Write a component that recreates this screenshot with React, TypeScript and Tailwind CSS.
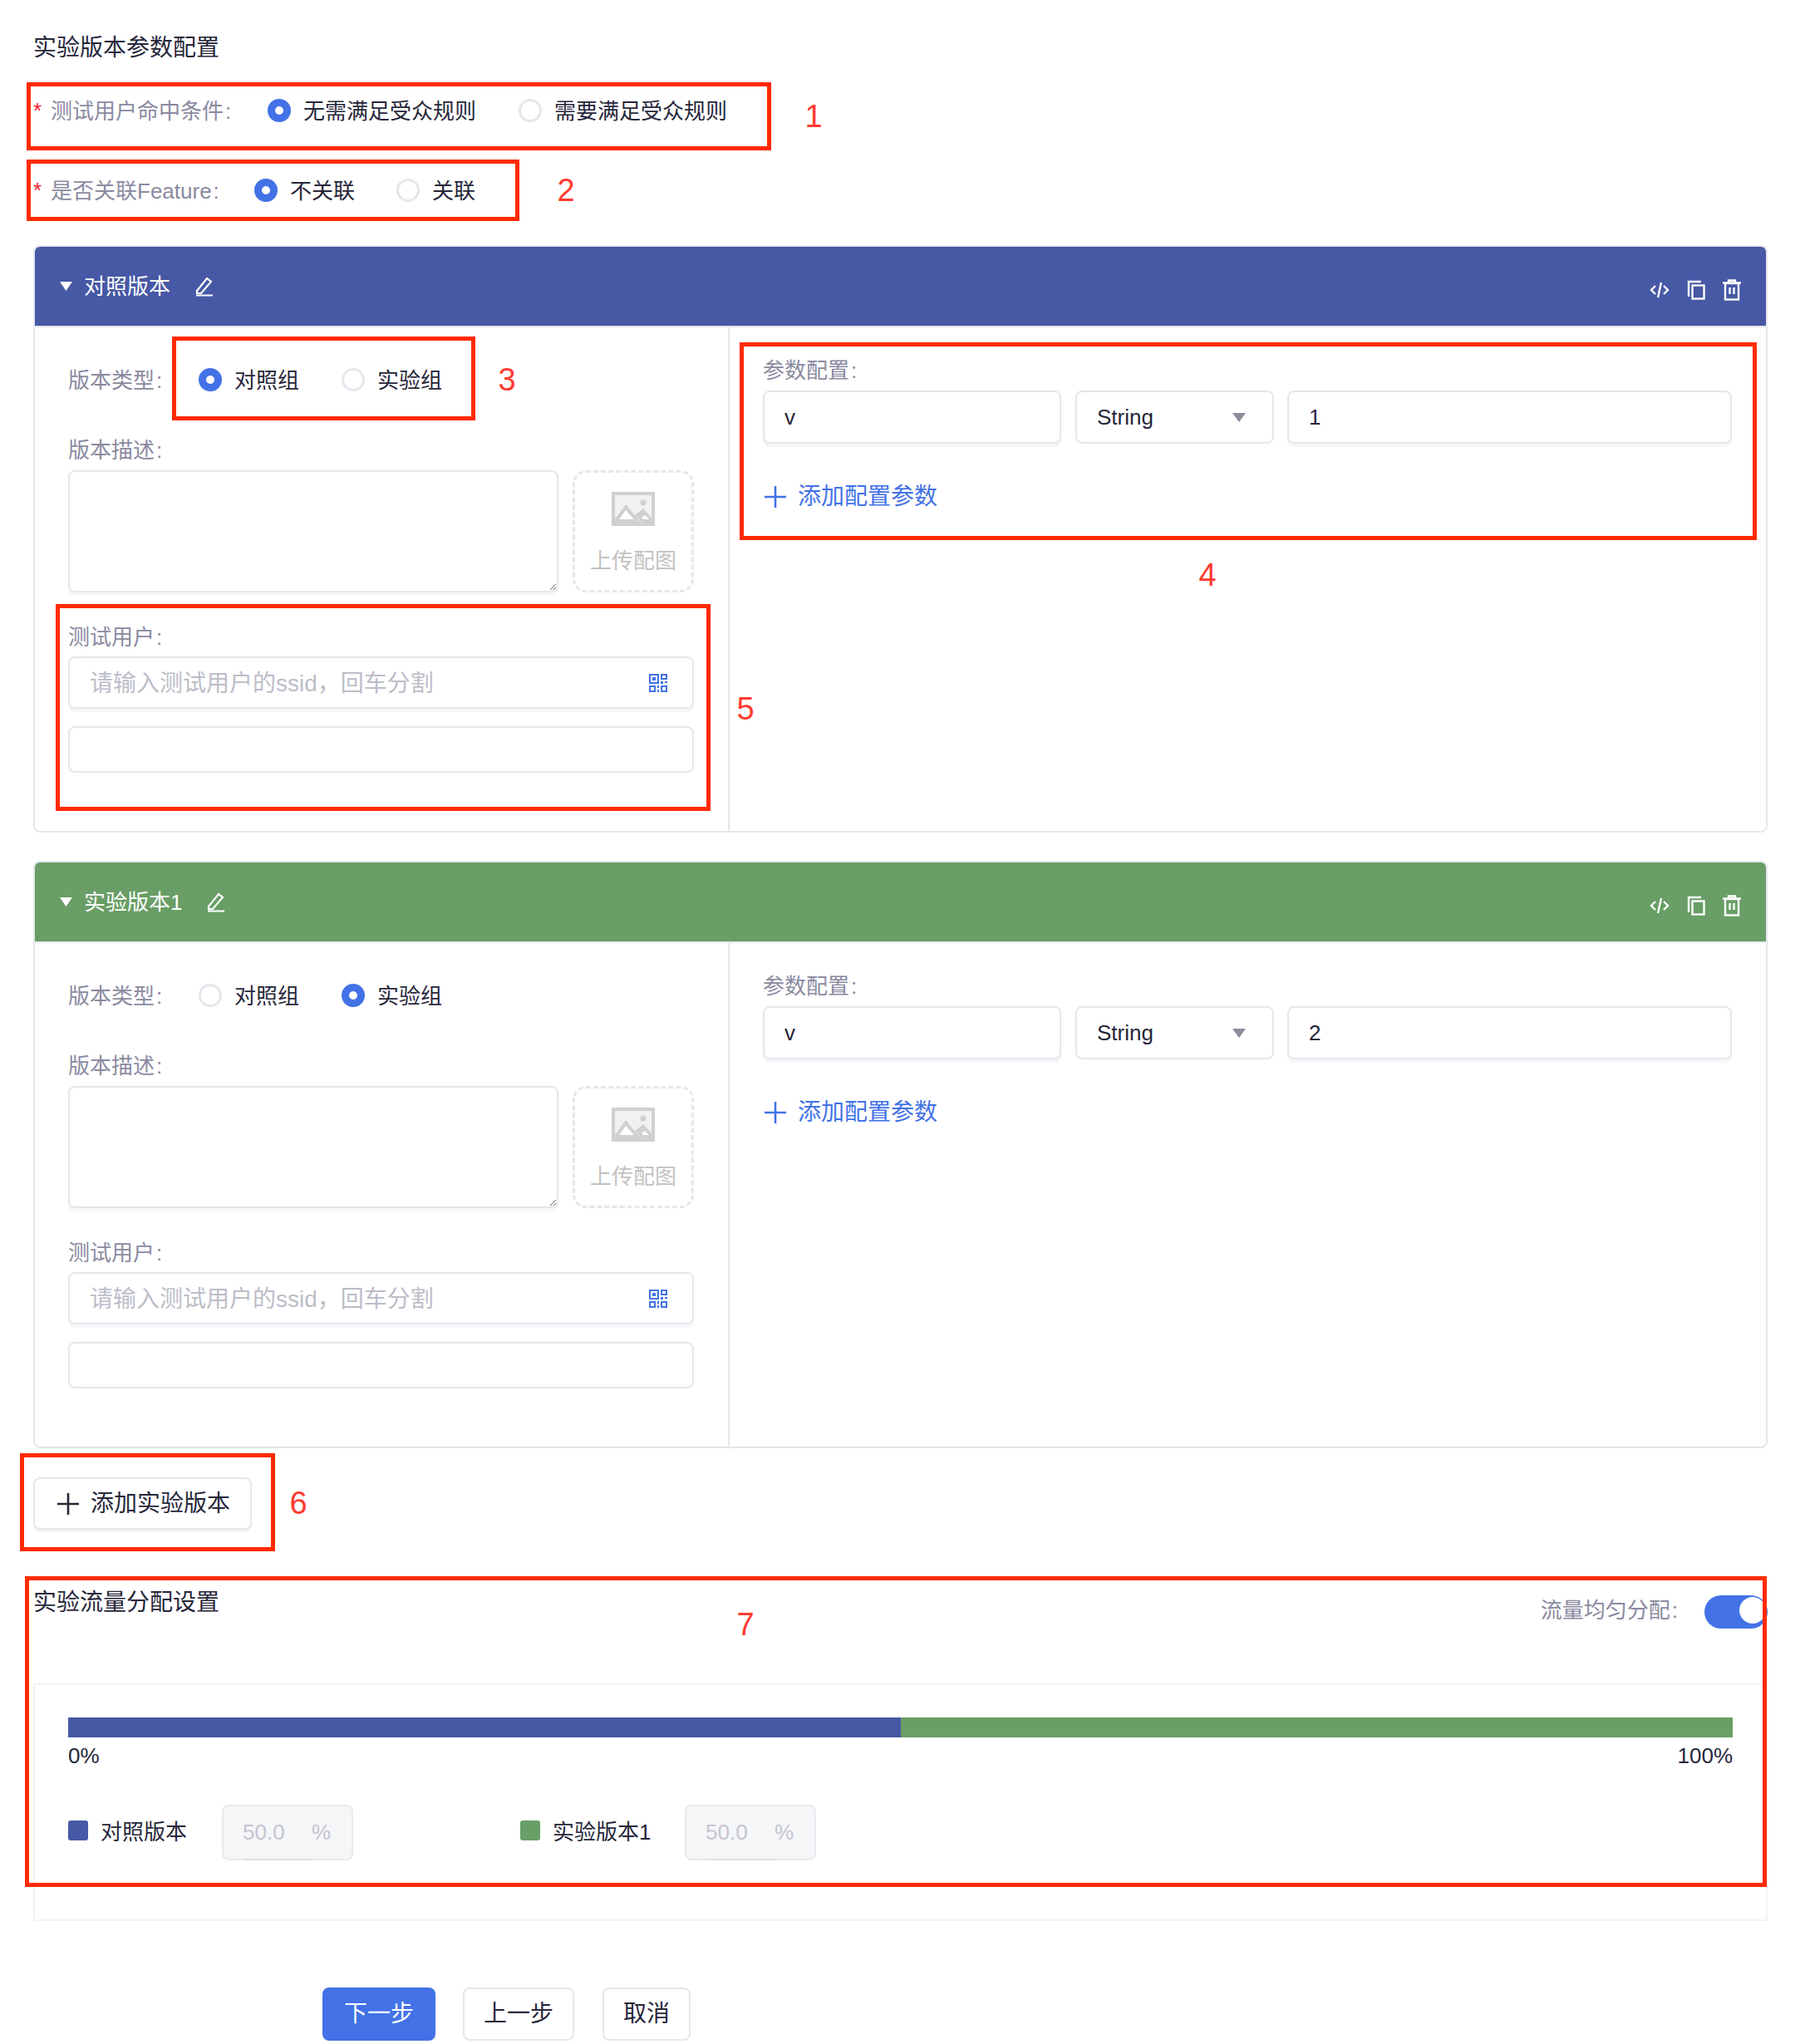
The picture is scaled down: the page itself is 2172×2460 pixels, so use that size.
import React from 'react';

const LABEL = 'text-[26px] leading-[36px] text-[#8a8aa0] whitespace-nowrap';
const BOX = 'rounded-lg border-2 border-[#e6e6ed] bg-white shadow-[0_4px_0_#f6f6f9]';

const Colon = () => <span className="ml-[2px]">:</span>;

const Radio: React.FC<{ on?: boolean; label: string; gap: string }> = ({ on, label, gap }) => (
  <label className={`flex items-center ${gap}`}>
    {on ? (
      <span className="w-[28px] h-[28px] rounded-full border-[9px] border-[#4272e6] bg-white" />
    ) : (
      <span className="w-[28px] h-[28px] rounded-full border-[3px] border-[#e6e6ed] bg-white" />
    )}
    <span className="ml-[15px] mt-[2px] text-[26px] leading-[36px] text-[#26263a] whitespace-nowrap">{label}</span>
  </label>
);

const HeaderIcons = () => (
  <div className="flex items-center gap-[21px] mt-[8px] text-white">
    <svg width="24" height="20" viewBox="0 0 24 20" fill="none" stroke="currentColor" strokeWidth="2.4">
      <path d="M7 5 L2 10 L7 15" />
      <path d="M17 5 L22 10 L17 15" />
      <path d="M14 1 L10 19" />
    </svg>
    <svg width="22" height="24" viewBox="0 0 22 24" fill="none" stroke="currentColor" strokeWidth="2.4">
      <path d="M2 20 V2 H17" />
      <rect x="6.5" y="6.5" width="14" height="16" />
    </svg>
    <svg width="22" height="26" viewBox="0 0 22 26" fill="none" stroke="currentColor" strokeWidth="2.4">
      <path d="M0 4.5 H22" />
      <path d="M7 4 V1.5 H15 V4" />
      <rect x="3" y="5" width="16" height="19.5" />
      <path d="M8.5 10 V18 M13.5 10 V18" />
    </svg>
  </div>
);

const EditIcon = () => (
  <svg width="22" height="24" viewBox="0 0 22 24" fill="none" stroke="white" strokeWidth="2.2">
    <path d="M2 17 L14 2 L19 6 L7 20 L2 20 Z" />
    <path d="M1 22.5 H21" />
  </svg>
);

const QrIcon = () => (
  <svg width="22" height="22" viewBox="0 0 22 22" fill="#4272e6">
    <path fillRule="evenodd" d="M0 0H12V12H0Z M2 2V10H10V2Z" />
    <rect x="4" y="4" width="4" height="4" />
    <path fillRule="evenodd" d="M14 0H22V7H14Z M16 2V5H20V2Z" />
    <rect x="14" y="9" width="3" height="3" />
    <rect x="19" y="9" width="3" height="2" />
    <path fillRule="evenodd" d="M0 14H8V22H0Z M2 16V20H6V16Z" />
    <rect x="10" y="14" width="2" height="3" />
    <rect x="10" y="19" width="2" height="3" />
    <path fillRule="evenodd" d="M14 14H22V22H14Z M16 16V20H20V16Z" />
  </svg>
);

const ImageIcon = () => (
  <svg width="52" height="41" viewBox="0 0 52 41">
    <rect width="52" height="41" fill="#cfd0d0" />
    <rect x="4" y="4" width="44" height="33" fill="#f1f1f1" />
    <circle cx="38" cy="13" r="3.5" fill="#cfd0d0" />
    <path d="M4 33 L17 15 L35 37 H4Z" fill="#cfd0d0" />
    <path d="M9 33 L17 22 L27 33Z" fill="#ffffff" />
    <path d="M28 28 L38 20 L48 31 V37 H36Z" fill="#cfd0d0" />
    <path d="M36 31 L40 28 L45 33 H38Z" fill="#ffffff" />
  </svg>
);

const PlusIcon: React.FC<{ color: string; size: number }> = ({ color, size }) => (
  <svg width={size} height={size} viewBox="0 0 26 26" stroke={color} strokeWidth="2.6">
    <path d="M13 0 V26 M0 13 H26" />
  </svg>
);

interface VersionCardProps {
  title: string;
  headerClass: string;
  editGap: string;
  control?: boolean;
  value: string;
}

const VersionCard: React.FC<VersionCardProps> = ({ title, headerClass, editGap, control, value }) => (
  <div className="rounded-lg border-2 border-[#e6e6ed] overflow-hidden">
    <div className={`h-[97px] flex items-center justify-between pl-[30px] pr-[30px] border-b-2 border-[#e6e6ed] ${headerClass}`}>
      <div className="flex items-center">
        <svg width="15" height="11" viewBox="0 0 15 11" fill="white">
          <path d="M0 0 H15 L7.5 11Z" />
        </svg>
        <span className="ml-[14px] text-[26px] leading-[36px] text-white">{title}</span>
        <span className={editGap}>
          <EditIcon />
        </span>
      </div>
      <HeaderIcons />
    </div>
    <div className="flex h-[606px]">
      <div className="w-[836px] shrink-0 border-r-2 border-[#e6e6ed] pl-[40px] pr-[41px] pt-[45px]">
        <div className="flex items-center h-[36px]">
          <span className={`${LABEL} w-[157px] mt-[2px]`}>版本类型<Colon /></span>
          <Radio on={control} label="对照组" gap="mr-[51px]" />
          <Radio on={!control} label="实验组" gap="" />
        </div>
        <div className={`${LABEL} mt-[49px]`}>版本描述<Colon /></div>
        <div className="flex mt-[6px] gap-[17px]">
          <textarea className={`${BOX} w-[590px] h-[147px] outline-none block`} />
          <div className="w-[146px] h-[147px] rounded-2xl border-[3px] border-dashed border-[#e6e6ed] flex flex-col items-center pt-[23px]">
            <ImageIcon />
            <span className="mt-[24px] text-[26px] leading-[36px] text-[#c2c2c2] whitespace-nowrap">上传配图</span>
          </div>
        </div>
        <div className={`${LABEL} mt-[36px]`}>测试用户<Colon /></div>
        <div className={`${BOX} mt-[5px] h-[63px] flex items-center pl-[24px] pr-[30px]`}>
          <input
            placeholder="请输入测试用户的ssid，回车分割"
            className="flex-1 min-w-0 mt-[2px] text-[28px] outline-none placeholder:text-[#bcbdc8]"
          />
          <QrIcon />
        </div>
        <div className="mt-[21px] h-[56px] rounded-lg border-2 border-[#e6e6ed]" />
      </div>
      <div className="flex-1 min-w-0 pl-[40px] pr-[41px] pt-[34px]">
        <div className={LABEL}>参数配置<Colon /></div>
        <div className="flex mt-[6px] gap-[17px] h-[64px]">
          <input
            defaultValue="v"
            className={`${BOX} w-[359px] pl-[24px] text-[26px] text-[#26263a] outline-none`}
          />
          <div className="w-[239px] rounded-lg border-2 border-[#e6e6ed] flex items-center justify-between pl-[24px] pr-[32px] text-[26px] text-[#26263a]">
            String
            <svg width="16" height="11" viewBox="0 0 16 11" fill="#8c8c9c">
              <path d="M0 0 H16 L8 11Z" />
            </svg>
          </div>
          <input
            defaultValue={value}
            className={`${BOX} flex-1 min-w-0 pl-[24px] -ml-[1px] text-[26px] text-[#26263a] outline-none`}
          />
        </div>
        <div className="flex items-center mt-[46px] h-[36px] pl-[2px]">
          <PlusIcon color="#4272e6" size={26} />
          <span className="ml-[14px] text-[28px] text-[#4272e6] whitespace-nowrap">添加配置参数</span>
        </div>
      </div>
    </div>
  </div>
);

const Legend: React.FC<{ color: string; label: string; className: string; labelWidth: string }> = ({ color, label, className, labelWidth }) => (
  <div className={`flex items-center ${className}`}>
    <span className={`w-[24px] h-[24px] rounded-[3px] -mt-[6px] ${color}`} />
    <span className={`ml-[15px] ${labelWidth} -mt-[2px] text-[26px] leading-[36px] text-[#26263a] whitespace-nowrap`}>{label}</span>
    <div className="relative w-[158px] h-[67px] rounded-lg border-2 border-[#e9eaef] bg-[#f5f6f8] flex items-center justify-between pl-[23px] pr-[25px] text-[26px] text-[#c3c5d0]">
      <span>50.0</span>
      <span>%</span>
      <span className="absolute left-[23px] bottom-[-2px] w-[84px] h-[2px] bg-[#dfe0e5]" />
    </div>
  </div>
);

const RedBox: React.FC<{ className: string }> = ({ className }) => (
  <div className={`absolute border-[5px] border-[#ff2a00] pointer-events-none ${className}`} />
);

const Num: React.FC<{ className: string; n: number }> = ({ className, n }) => (
  <span className={`absolute -translate-x-1/2 -translate-y-1/2 text-[38px] leading-none text-[#ff3b30] ${className}`}>{n}</span>
);

export default function App() {
  return (
    <div className="relative w-[2172px] h-[2460px] bg-white pl-[40px] pr-[45px] pt-[38px] font-['Liberation_Sans','Noto_Sans_CJK_SC',sans-serif] text-[#26263a]">
      <div className="text-[28px] leading-[40px] whitespace-nowrap">实验版本参数配置</div>

      <div className="flex items-center h-[36px] mt-[37px]">
        <span className="w-[21px] text-[26px] text-[#f5222d]">*</span>
        <span className={`${LABEL} w-[261px] mt-[2px]`}>测试用户命中条件<Colon /></span>
        <Radio on label="无需满足受众规则" gap="mr-[51px]" />
        <Radio label="需要满足受众规则" gap="" />
      </div>
      <div className="flex items-center h-[36px] mt-[60px]">
        <span className="w-[21px] text-[26px] text-[#f5222d]">*</span>
        <span className={`${LABEL} w-[245px] mt-[2px]`}>是否关联Feature<Colon /></span>
        <Radio on label="不关联" gap="mr-[50px]" />
        <Radio label="关联" gap="" />
      </div>

      <div className="mt-[48px]">
        <VersionCard title="对照版本" headerClass="bg-[#4758a5]" editGap="ml-[30px]" control value="1" />
      </div>
      <div className="mt-[34px]">
        <VersionCard title="实验版本1" headerClass="bg-[#699e66]" editGap="ml-[30px]" value="2" />
      </div>

      <button className="mt-[35px] w-[263px] h-[63px] rounded-lg border-2 border-[#e6e6ed] shadow-[0_3px_0_#f3f3f6] flex items-center pl-[27px] text-[28px] text-[#26263a]">
        <PlusIcon color="#26263a" size={26} />
        <span className="ml-[14px] whitespace-nowrap">添加实验版本</span>
      </button>

      <div className="mt-[58px] h-[127px] flex justify-between items-start">
        <div className="mt-[10px] text-[28px] leading-[40px] whitespace-nowrap">实验流量分配设置</div>
        <div className="mt-[21px] flex items-center">
          <span className={`${LABEL} -mt-[4px]`}>流量均匀分配<Colon /></span>
          <span className="relative ml-[32px] w-[76px] h-[40px] rounded-full bg-[#4272e6]">
            <span className="absolute right-[2px] top-[2px] w-[32px] h-[32px] rounded-full bg-white" />
          </span>
        </div>
      </div>

      <div className="h-[286px] border-2 border-[#f3f3f8] pl-[40px] pr-[40px] pt-[39px]">
        <div className="flex h-[24px]">
          <div className="w-1/2 bg-[#4758a5]" />
          <div className="w-1/2 bg-[#699e66]" />
        </div>
        <div className="flex justify-between mt-[4px] text-[26px] leading-[36px]">
          <span>0%</span>
          <span>100%</span>
        </div>
        <div className="flex mt-[41px]">
          <Legend color="bg-[#4758a5]" label="对照版本" labelWidth="w-[146px]" className="w-[544px]" />
          <Legend color="bg-[#699e66]" label="实验版本1" labelWidth="w-[159px]" className="" />
        </div>
      </div>

      <div className="flex mt-[80px] ml-[348px] text-[28px]">
        <button className="w-[136px] h-[64px] rounded-lg bg-[#4272e6] text-white">下一步</button>
        <button className="ml-[33px] w-[134px] h-[64px] rounded-lg border-2 border-[#e6e6ed]">上一步</button>
        <button className="ml-[34px] w-[106px] h-[64px] rounded-lg border-2 border-[#e6e6ed]">取消</button>
      </div>

      <RedBox className="left-[32px] top-[99px] w-[896px] h-[82px]" />
      <RedBox className="left-[32px] top-[192px] w-[593px] h-[74px]" />
      <RedBox className="left-[207px] top-[405px] w-[365px] h-[101px]" />
      <RedBox className="left-[890px] top-[412px] w-[1224px] h-[238px]" />
      <RedBox className="left-[67px] top-[727px] w-[788px] h-[249px]" />
      <RedBox className="left-[24px] top-[1749px] w-[307px] h-[118px]" />
      <RedBox className="left-[30px] top-[1897px] w-[2096px] h-[374px]" />

      <Num className="left-[979px] top-[140px]" n={1} />
      <Num className="left-[681px] top-[229px]" n={2} />
      <Num className="left-[610px] top-[457px]" n={3} />
      <Num className="left-[1453px] top-[692px]" n={4} />
      <Num className="left-[897px] top-[853px]" n={5} />
      <Num className="left-[359px] top-[1809px]" n={6} />
      <Num className="left-[897px] top-[1955px]" n={7} />
    </div>
  );
}
